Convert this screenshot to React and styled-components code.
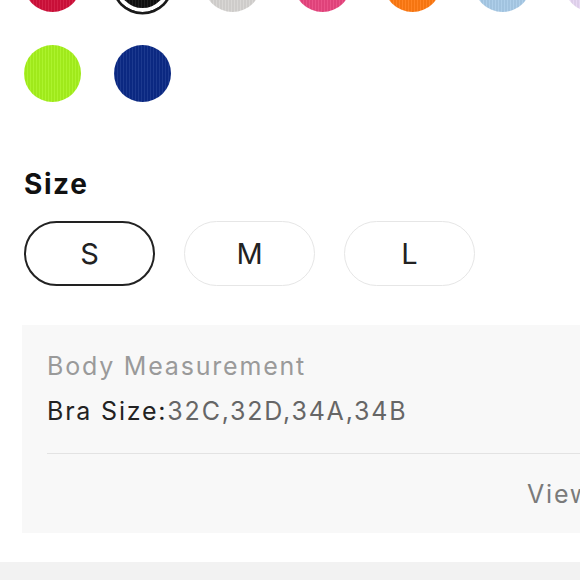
import React from "react";
import styled, { createGlobalStyle, css } from "styled-components";

const Global = createGlobalStyle`
  html, body { margin: 0; padding: 0; background: #fff; overflow: hidden; }
  body { font-family: Inter, "Noto Sans", "Liberation Sans", sans-serif; color: #222; }
`;

const Page = styled.div`
  width: 660px;
  display: flex;
  flex-direction: column;
`;

const Content = styled.div`
  padding-left: 24px;
  margin-top: -45px;
  display: flex;
  flex-direction: column;
`;

const SwatchGrid = styled.div`
  display: flex;
  flex-wrap: wrap;
  column-gap: 33px;
  row-gap: 33px;
  width: 620px;
`;

const Swatch = styled.div`
  width: 57px;
  height: 57px;
  border-radius: 50%;
  background-color: ${(p) => p.$color};
  background-image: repeating-linear-gradient(
    90deg,
    rgba(255, 255, 255, 0.07) 0px,
    rgba(255, 255, 255, 0.07) 1px,
    rgba(0, 0, 0, 0.04) 1px,
    rgba(0, 0, 0, 0.04) 3px
  );
  ${(p) =>
    p.$selected &&
    css`
      box-shadow: inset 0 0 0 4px #fff, 0 0 0 2.5px #1a1a1a;
    `}
`;

const Heading = styled.h2`
  margin: 64px 0 0 0;
  font-size: 28px;
  line-height: 36px;
  font-weight: 700;
  letter-spacing: 1.6px;
  color: #111;
`;

const SizeRow = styled.div`
  display: flex;
  gap: 29px;
  margin-top: 19px;
`;

const SizeButton = styled.button`
  width: 131px;
  height: 65px;
  border-radius: 33px;
  background: #fff;
  font-family: inherit;
  font-size: 29px;
  font-weight: 400;
  color: #222;
  padding: 0;
  display: flex;
  align-items: center;
  justify-content: center;
  box-sizing: border-box;
  border: ${(p) => (p.$active ? "2px solid #222" : "1.5px solid #e6e6e6")};
`;

const MeasureCard = styled.div`
  margin: 39px 0 0 -2px;
  background: #f8f8f8;
  padding: 24px 0 0 25px;
  height: 208px;
  box-sizing: border-box;
  display: flex;
  flex-direction: column;
`;

const CardText = styled.div`
  font-size: 25px;
  line-height: 34px;
  letter-spacing: 1.8px;
`;

const CardLabel = styled(CardText)`
  color: #9a9a9a;
`;

const CardValue = styled(CardText)`
  margin-top: 11px;
  color: #222;
  span {
    color: #666;
  }
`;

const Divider = styled.div`
  margin-top: 25px;
  height: 1px;
  background: #e3e3e3;
`;

const ViewRow = styled(CardText)`
  display: flex;
  padding-left: 480px;
  margin-top: 23px;
  color: #7a7a7a;
`;

const BottomStrip = styled.div`
  margin-top: 29px;
  height: 40px;
  background: #f2f2f2;
`;

const colors = [
  { c: "#d0103a" },
  { c: "#111111", selected: true },
  { c: "#d6d4d2" },
  { c: "#e8457f" },
  { c: "#ff7a12" },
  { c: "#a8cbe8" },
  { c: "#e6d6f2" },
  { c: "#a6f21c" },
  { c: "#0b2a86" },
];

export default function App() {
  return (
    <Page>
      <Global />
      <Content>
        <SwatchGrid>
          {colors.map((s, i) => (
            <Swatch key={i} $color={s.c} $selected={s.selected} />
          ))}
        </SwatchGrid>
        <Heading>Size</Heading>
        <SizeRow>
          <SizeButton $active>S</SizeButton>
          <SizeButton>M</SizeButton>
          <SizeButton>L</SizeButton>
        </SizeRow>
        <MeasureCard>
          <CardLabel>Body Measurement</CardLabel>
          <CardValue>
            Bra Size:<span>32C,32D,34A,34B</span>
          </CardValue>
          <Divider />
          <ViewRow>View</ViewRow>
        </MeasureCard>
      </Content>
      <BottomStrip />
    </Page>
  );
}
